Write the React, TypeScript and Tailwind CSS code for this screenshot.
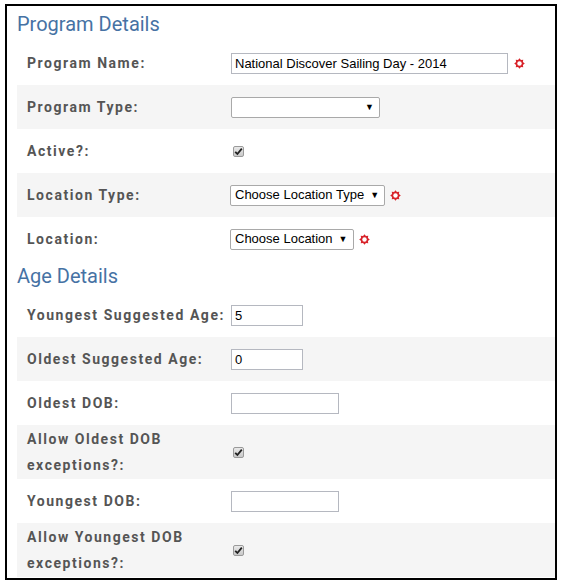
import React from 'react'

const labelFont = { fontFamily: 'Roboto, "Noto Sans", sans-serif' }

function Required() {
  return (
    <svg width="11" height="11" viewBox="0 0 10 10" className="shrink-0">
      <polygon
        points="5,0.2 6.3,1.9 8.4,1.6 8.1,3.7 9.8,5 8.1,6.3 8.4,8.4 6.3,8.1 5,9.8 3.7,8.1 1.6,8.4 1.9,6.3 0.2,5 1.9,3.7 1.6,1.6 3.7,1.9"
        fill="#d8232a"
      />
      <circle cx="5" cy="5" r="2" fill="#fff" />
    </svg>
  )
}

function TextBox({ value = '', width }: { value?: string; width: string }) {
  return (
    <div
      className={`${width} h-[21px] border border-[#b5b8c0] bg-white px-[3px] text-[13px] leading-[19px] text-black`}
      style={{ fontFamily: '"Liberation Sans", Arial, sans-serif' }}
    >
      {value}
    </div>
  )
}

function SelectBox({ value = '', width }: { value?: string; width?: string }) {
  return (
    <div
      className={`${width ?? ''} flex h-[21px] items-center justify-between gap-[6px] rounded-[2px] border border-[#a9a9a9] bg-white pl-[4px] pr-[5px] text-[13px] text-black`}
      style={{ fontFamily: '"Liberation Sans", Arial, sans-serif' }}
    >
      <span>{value}</span>
      <span className="text-[9px] leading-none">▼</span>
    </div>
  )
}

function Check() {
  return (
    <div className="ml-[2px] flex h-[11px] w-[11px] items-center justify-center rounded-[2px] border border-[#9a9a9a] bg-gradient-to-b from-[#e9e9e9] to-[#c9c9c9]">
      <svg width="9" height="9" viewBox="0 0 9 9">
        <path d="M1.2 4.8 L3.4 7 L7.8 1.6" stroke="#222" strokeWidth="1.8" fill="none" />
      </svg>
    </div>
  )
}

function Row({
  label,
  gray,
  tall,
  children,
}: {
  label: React.ReactNode
  gray?: boolean
  tall?: boolean
  children: React.ReactNode
}) {
  return (
    <div className={`flex items-center pl-[10px] ${tall ? 'h-[54px]' : 'h-[44px]'} ${gray ? 'bg-[#f5f5f5]' : 'bg-white'}`}>
      <div
        className="w-[204px] shrink-0 text-[14px] font-bold leading-[26px] tracking-[0.11em] text-[#555555]"
        style={labelFont}
      >
        {label}
      </div>
      <div className="flex items-center">{children}</div>
    </div>
  )
}

function Heading({ children, className }: { children: React.ReactNode; className: string }) {
  return (
    <h2 className={`text-[20px] font-normal text-[#4672a4] ${className}`} style={labelFont}>
      {children}
    </h2>
  )
}

export default function App() {
  return (
    <div className="min-h-[588px] bg-white pl-[5px] pt-[4px]">
      <div className="w-[552px] border-2 border-black bg-white pl-[10px] pb-[1px]">
        {/* Program */}
        <Heading className="flex h-[35px] items-center">Program Details</Heading>
        <Row label="Program Name:">
          <TextBox value="National Discover Sailing Day - 2014" width="w-[277px]" />
          <span className="ml-[6px] flex">
            <Required />
          </span>
        </Row>
        <Row label="Program Type:" gray>
          <SelectBox width="w-[149px]" />
        </Row>
        <Row label="Active?:">
          <Check />
        </Row>
        <Row label="Location Type:" gray>
          <div className="-ml-[1px] flex items-center gap-[5px]">
            <SelectBox value="Choose Location Type" />
            <Required />
          </div>
        </Row>
        <Row label="Location:">
          <div className="-ml-[1px] flex items-center gap-[5px]">
            <SelectBox value="Choose Location" />
            <Required />
          </div>
        </Row>

        {/* Age */}
        <Heading className="flex h-[32px] items-center pb-[2px]">Age Details</Heading>
        <Row label="Youngest Suggested Age:">
          <TextBox value="5" width="w-[72px]" />
        </Row>
        <Row label="Oldest Suggested Age:" gray>
          <TextBox value="0" width="w-[72px]" />
        </Row>
        <Row label="Oldest DOB:">
          <TextBox width="w-[108px]" />
        </Row>
        <Row label={<>Allow Oldest DOB<br />exceptions?:</>} gray tall>
          <Check />
        </Row>
        <Row label="Youngest DOB:">
          <TextBox width="w-[108px]" />
        </Row>
        <Row label={<>Allow Youngest DOB<br />exceptions?:</>} gray tall>
          <Check />
        </Row>
      </div>
    </div>
  )
}
